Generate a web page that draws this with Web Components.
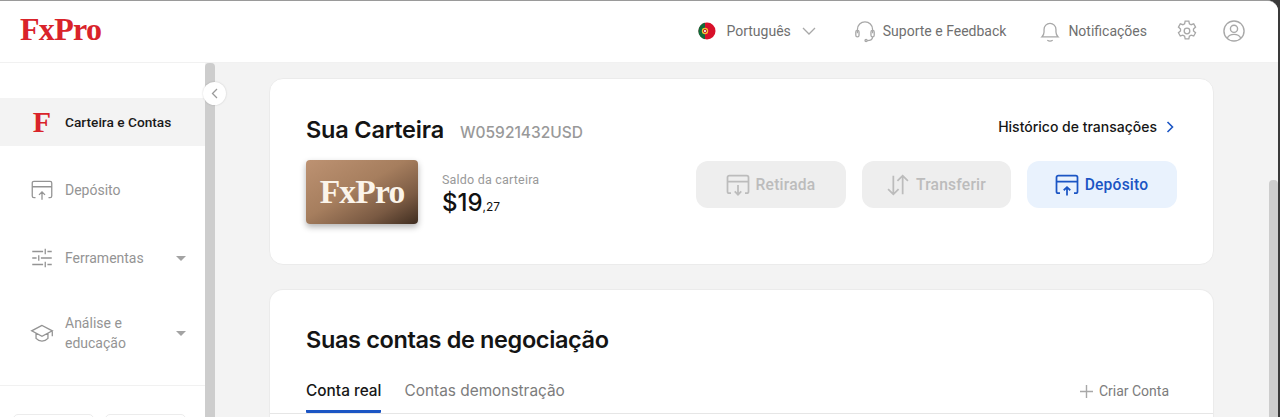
<!DOCTYPE html>
<html lang="pt">
<head>
<meta charset="utf-8">
<title>FxPro</title>
<style>
    html, body { margin: 0; height: 100%; overflow: hidden; background: #3a3a3a; }
    body { font-family: Roboto, "Liberation Sans", sans-serif; }
</style>
</head>
<body>
<fx-app></fx-app>

<script>
// ícones usados em mais de um componente
const ICONS = {
    deposit: `<path d="M3 11V5.500A1.500 1.500 0 0 1 4.500 4h15A1.500 1.500 0 0 1 21 5.500V17.500a1.500 1.500 0 0 1-1.500 1.500H18M6 19H4.500A1.500 1.500 0 0 1 3 17.500V9h18M12 21v-7M9.200 16.500 12 13.800l2.800 2.700"/>`,
    withdraw: `<path d="M3 11V5.500A1.500 1.500 0 0 1 4.500 4h15A1.500 1.500 0 0 1 21 5.500V17.500a1.500 1.500 0 0 1-1.500 1.500H18M6 19H4.500A1.500 1.500 0 0 1 3 17.500V9h18M12 12v8M9.200 17.500 12 20.300l2.800-2.800"/>`,
    transfer: `<path d="M8 4v16M3.500 15.500 8 20l4.500-4.500M16 20V4M11.500 8.500 16 4l4.500 4.500"/>`,
    sliders: `<path d="M3 6h10M17 6h4M15 3.500v5M3 12h4M11 12h10M9 9.500v5M3 18h10M17 18h4M15 15.500v5"/>`,
    school: `<path d="M12 5 2.500 10 12 15l9.500-5zM6.500 12.500V17c1.500 1.700 3.300 2.500 5.500 2.500s4-.8 5.500-2.500v-4.500M21.500 10v5"/>`,
    headset: `<path d="M5 14v-3.500a7 7 0 0 1 14 0V14"/><rect x="3.500" y="11.500" width="3" height="6" rx="1.500"/><rect x="17.500" y="11.500" width="3" height="6" rx="1.500"/><path d="M19 17.500c0 2.300-1.800 3.300-5 3.300"/><circle cx="13" cy="20.800" r="1"/>`,
    bell: `<path d="M4.500 17.500c1.200-1.200 2-2.500 2-4.500v-2.500a5.500 5.500 0 0 1 11 0V13c0 2 .8 3.300 2 4.500z"/><path d="M9.500 20.500c1.500 1 3.500 1 5 0"/>`,
    gear: `<path d="M10.300 2.800h3.400l.5 2.500 1.600.9 2.400-.8 1.700 3-1.900 1.700v1.800l1.900 1.700-1.700 3-2.400-.8-1.600.9-.5 2.500h-3.400l-.5-2.500-1.600-.9-2.400.8-1.700-3 1.900-1.700v-1.800L4.100 8.400l1.700-3 2.400.8 1.600-.9z"/><circle cx="12" cy="12" r="2.600"/>`,
    user: `<circle cx="12" cy="12" r="9.300"/><circle cx="12" cy="10" r="3.300"/><path d="M5.800 18.500c1.200-2.300 3.300-3.400 6.200-3.400s5 1.100 6.200 3.400"/>`
};

function icon(name, size, width) {
    return `<svg width="${size}" height="${size}" viewBox="0 0 24 24" fill="none" stroke="currentColor" stroke-width="${width}">${ICONS[name]}</svg>`;
}

// cabeçalho
class FxHeader extends HTMLElement {
    constructor() {
        super();
        this.attachShadow({ mode: 'open' });
    }

    connectedCallback() {
        this.shadowRoot.innerHTML = `
            <style>
                :host {
                    display: flex;
                    align-items: center;
                    height: 59px;
                    flex: none;
                    padding: 0 31px 2px 20px;
                    background: #fff;
                    border-bottom: 1px solid #f1f1f1;
                    color: #6f6f6f;
                    font: 400 14px Roboto, "Liberation Sans", sans-serif;
                }
                .logo {
                    font: 700 32px "Liberation Serif", serif;
                    letter-spacing: -.7px;
                    color: #d9232a;
                    margin-right: auto;
                    line-height: 1;
                    padding-bottom: 4px;
                }
                .item { display: flex; align-items: center; }
                .item svg { color: #a8a8a8; display: block; }
                .lang { gap: 10px; margin-right: 36px; }
                .lang .chev { margin-left: 1px; }
                .support { gap: 5px; margin-right: 31px; }
                .notif { gap: 5px; margin-right: 27px; }
                .gear { margin-right: 21px; }
            </style>
            <div class="logo">FxPro</div>
            <div class="item lang">
                <svg width="18" height="18" viewBox="0 0 18 18">
                    <circle cx="9" cy="9" r="8.500" fill="#d8102a"/>
                    <path d="M7 .7A8.500 8.500 0 0 0 7 17.300z" fill="#0f6b3a"/>
                    <circle cx="7" cy="9" r="3.200" fill="#f1c232"/>
                    <circle cx="7" cy="9" r="1.600" fill="#f4f4f4" stroke="#c4202c"/>
                </svg>
                <span>Português</span>
                <svg class="chev" width="14" height="8" viewBox="0 0 14 8" fill="none" stroke="#a8a8a8" stroke-width="1.300"><path d="M1 1l6 6 6-6"/></svg>
            </div>
            <div class="item support">${icon('headset', 26, 1.200)}<span>Suporte e Feedback</span></div>
            <div class="item notif">${icon('bell', 26, 1.200)}<span>Notificações</span></div>
            <div class="item gear">${icon('gear', 26, 1.200)}</div>
            <div class="item">${icon('user', 26, 1.300)}</div>
        `;
    }
}

// item do menu lateral
class FxNavItem extends HTMLElement {
    constructor() {
        super();
        this.attachShadow({ mode: 'open' });
    }

    connectedCallback() {
        const name = this.getAttribute('icon');
        const glyph = name ? icon(name, 26, 1.200) : '<span class="f">F</span>';
        const caret = this.hasAttribute('caret') ? '<span class="caret"></span>' : '';
        this.shadowRoot.innerHTML = `
            <style>
                :host {
                    display: flex;
                    align-items: center;
                    min-height: 48px;
                    padding: 0 19px 0 29px;
                    color: #949494;
                    font: 400 14px/20px Roboto, "Liberation Sans", sans-serif;
                }
                :host([active]) { background: #f3f3f3; color: #1a1a1a; font-weight: 500; font-size: 13.700px; }
                :host([tall]) { min-height: 62px; }
                .glyph { width: 26px; height: 26px; display: flex; align-items: center; justify-content: center; margin-right: 10px; flex: none; }
                .f { font: 700 30px/26px "Liberation Serif", serif; color: #d9232a; }
                .label { flex: 1; }
                .caret { border: 5.500px solid transparent; border-top: 5px solid #a3a3a3; border-bottom: 0; }
            </style>
            <div class="glyph">${glyph}</div>
            <div class="label"><slot></slot></div>
            ${caret}
        `;
    }
}

// menu lateral
class FxSidebar extends HTMLElement {
    constructor() {
        super();
        this.attachShadow({ mode: 'open' });
    }

    connectedCallback() {
        this.shadowRoot.innerHTML = `
            <style>
                :host {
                    display: flex;
                    flex-direction: column;
                    width: 205px;
                    flex: none;
                    background: #fff;
                    overflow: hidden;
                }
                nav { display: flex; flex-direction: column; gap: 20px; padding-top: 35px; padding-bottom: 21px; border-bottom: 1px solid #f1f1f1; }
                .links { display: flex; gap: 11px; padding: 28px 19px 0 13px; }
                .links div { flex: 1; height: 40px; border: 1px solid #ececec; border-radius: 5px; }
            </style>
            <nav><slot></slot></nav>
            <div class="links"><div></div><div></div></div>
        `;
    }
}

// botão de ação da carteira
class FxButton extends HTMLElement {
    constructor() {
        super();
        this.attachShadow({ mode: 'open' });
    }

    connectedCallback() {
        this.shadowRoot.innerHTML = `
            <style>
                :host {
                    display: flex;
                    align-items: center;
                    justify-content: center;
                    gap: 4px;
                    width: 150px;
                    height: 47px;
                    border-radius: 12px;
                    background: #eeeeee;
                    color: #bcbcbc;
                    font: 500 15.600px Roboto, "Liberation Sans", sans-serif;
                    letter-spacing: .2px;
                }
                :host([primary]) { background: #e9f2fd; color: #1b55c4; }
                svg { display: block; margin-left: -3px; }
            </style>
            ${icon(this.getAttribute('icon'), 28, 1.500)}
            <slot></slot>
        `;
    }
}

// cartão "Sua Carteira"
class FxWallet extends HTMLElement {
    constructor() {
        super();
        this.attachShadow({ mode: 'open' });
    }

    connectedCallback() {
        this.shadowRoot.innerHTML = `
            <style>
                :host {
                    display: block;
                    flex: none;
                    height: 187px;
                    box-sizing: border-box;
                    padding: 36px 36px 0 36px;
                    background: #fff;
                    border: 1px solid #ebebeb;
                    border-radius: 14px;
                    font-family: Inter, "Liberation Sans", sans-serif;
                }
                .top { display: flex; align-items: baseline; height: 45px; }
                h2 { margin: 0; font: 600 23.500px/30px Inter, "Liberation Sans", sans-serif; color: #141414; letter-spacing: -.2px; }
                .id { margin-left: 16px; color: #999; font-size: 15.500px; font-weight: 500; }
                .history { margin-left: auto; padding-right: 3px; display: flex; align-items: center; gap: 9px; color: #161616; font: 500 14px Inter, "Liberation Sans", sans-serif; position: relative; top: -6px; }
                .row { display: flex; align-items: flex-start; }
                .card {
                    width: 112px;
                    height: 64px;
                    border-radius: 4px;
                    background: linear-gradient(150deg, #bd9272 0%, #a67e5e 45%, #7a5a43 75%, #3f2d20 100%);
                    box-shadow: 0 3px 6px rgba(0, 0, 0, .3);
                    display: flex;
                    align-items: center;
                    justify-content: center;
                    color: #fbf4ea;
                    font: 700 33.500px "Liberation Serif", serif;
                    letter-spacing: -.8px;
                }
                .saldo { margin-left: 24px; margin-top: 12px; }
                .label { font: 400 12.500px/15px Roboto, "Liberation Sans", sans-serif; color: #999; letter-spacing: .2px; }
                .amount { font: 500 24px/30px Inter, "Liberation Sans", sans-serif; color: #111; margin-top: 1px; }
                .amount small { font-size: 12px; font-weight: 400; }
                .actions { margin-left: auto; margin-top: 1px; display: flex; gap: 16px; }
            </style>
            <div class="top">
                <h2>Sua Carteira</h2>
                <span class="id">W05921432USD</span>
                <span class="history">Histórico de transações
                    <svg width="8" height="12" viewBox="0 0 8 12" fill="none" stroke="#1b55c4" stroke-width="1.600"><path d="M1.500 1l5 5-5 5"/></svg>
                </span>
            </div>
            <div class="row">
                <div class="card">FxPro</div>
                <div class="saldo">
                    <div class="label">Saldo da carteira</div>
                    <div class="amount">$19<small>,27</small></div>
                </div>
                <div class="actions"><slot></slot></div>
            </div>
        `;
    }
}

// cartão das contas de negociação
class FxAccounts extends HTMLElement {
    constructor() {
        super();
        this.attachShadow({ mode: 'open' });
    }

    connectedCallback() {
        this.shadowRoot.innerHTML = `
            <style>
                :host {
                    display: block;
                    flex: none;
                    background: #fff;
                    border: 1px solid #ebebeb;
                    border-bottom: 0;
                    border-radius: 14px 14px 0 0;
                    height: 200px;
                    font-family: Inter, "Liberation Sans", sans-serif;
                }
                h2 { margin: 0; padding: 35px 36px 0; font: 600 23.500px/30px Inter, "Liberation Sans", sans-serif; color: #141414; letter-spacing: -.37px; }
                .tabs { display: flex; align-items: flex-start; height: 34px; margin-top: 24px; padding: 0 44px 0 36px; border-bottom: 1px solid #e6e6e6; }
                .tab { height: 34px; box-sizing: border-box; font-size: 15.400px; line-height: 24px; color: #7c7c7c; }
                .tab.on { color: #161616; font-weight: 500; border-bottom: 3px solid #1b55c4; border-radius: 0 0 1px 1px; margin-right: 23px; }
                .new { margin-left: auto; display: flex; align-items: center; gap: 6px; height: 24px; color: #7c7c7c; font: 400 14px Roboto, "Liberation Sans", sans-serif; }
            </style>
            <h2>Suas contas de negociação</h2>
            <div class="tabs">
                <div class="tab on">Conta real</div>
                <div class="tab">Contas demonstração</div>
                <div class="new">
                    <svg width="13" height="13" viewBox="0 0 13 13" stroke="#a8a8a8" stroke-width="1.400"><path d="M6.500 0v13M0 6.500h13"/></svg>
                    Criar Conta
                </div>
            </div>
        `;
    }
}

// barra de rolagem desenhada, ocupa o seu lugar no fluxo
class FxScrollbar extends HTMLElement {
    constructor() {
        super();
        this.attachShadow({ mode: 'open' });
    }

    connectedCallback() {
        const offset = this.getAttribute('offset') || 0;
        this.shadowRoot.innerHTML = `
            <style>
                :host { display: flex; flex-direction: column; flex: none; width: var(--w, 10px); padding-top: ${offset}px; box-sizing: border-box; }
                div { flex: 1; background: #cdcdcd; border-radius: 4px 4px 0 0; }
            </style>
            <div></div>
        `;
    }
}

// janela inteira
class FxApp extends HTMLElement {
    constructor() {
        super();
        this.attachShadow({ mode: 'open' });
    }

    connectedCallback() {
        this.shadowRoot.innerHTML = `
            <style>
                :host {
                    display: flex;
                    flex-direction: column;
                    height: 417px;
                    width: 1278px;
                    box-sizing: border-box;
                    border-top: 1px solid #9a9a9a;
                    border-top-right-radius: 11px;
                    background: #fff;
                    overflow: hidden;
                }
                .body { display: flex; flex: 1; min-height: 0; position: relative; background: #f3f3f3; }
                .collapse {
                    position: absolute;
                    left: 203px;
                    top: 19px;
                    width: 23px;
                    height: 23px;
                    border-radius: 50%;
                    background: #fff;
                    box-shadow: 0 0 2px rgba(0, 0, 0, .18);
                    display: flex;
                    align-items: center;
                    justify-content: center;
                }
                .main { flex: 1; display: flex; flex-direction: column; gap: 24px; padding: 15px 55px 0 54px; min-width: 0; }
                .right { --w: 9px; }
            </style>
            <fx-header></fx-header>
            <div class="body">
                <fx-sidebar>
                    <fx-nav-item active>Carteira e Contas</fx-nav-item>
                    <fx-nav-item icon="deposit">Depósito</fx-nav-item>
                    <fx-nav-item icon="sliders" caret>Ferramentas</fx-nav-item>
                    <fx-nav-item icon="school" caret tall>Análise e<br>educação</fx-nav-item>
                </fx-sidebar>
                <fx-scrollbar></fx-scrollbar>
                <div class="collapse">
                    <svg width="7" height="11" viewBox="0 0 7 11" fill="none" stroke="#9a9a9a" stroke-width="1.300"><path d="M6 1 1.500 5.500 6 10"/></svg>
                </div>
                <div class="main">
                    <fx-wallet>
                        <fx-button icon="withdraw">Retirada</fx-button>
                        <fx-button icon="transfer" style="width: 149px">Transferir</fx-button>
                        <fx-button icon="deposit" primary>Depósito</fx-button>
                    </fx-wallet>
                    <fx-accounts></fx-accounts>
                </div>
                <fx-scrollbar class="right" offset="117"></fx-scrollbar>
            </div>
        `;
    }
}

customElements.define('fx-header', FxHeader);
customElements.define('fx-nav-item', FxNavItem);
customElements.define('fx-sidebar', FxSidebar);
customElements.define('fx-button', FxButton);
customElements.define('fx-wallet', FxWallet);
customElements.define('fx-accounts', FxAccounts);
customElements.define('fx-scrollbar', FxScrollbar);
customElements.define('fx-app', FxApp);
</script>
</body>
</html>
